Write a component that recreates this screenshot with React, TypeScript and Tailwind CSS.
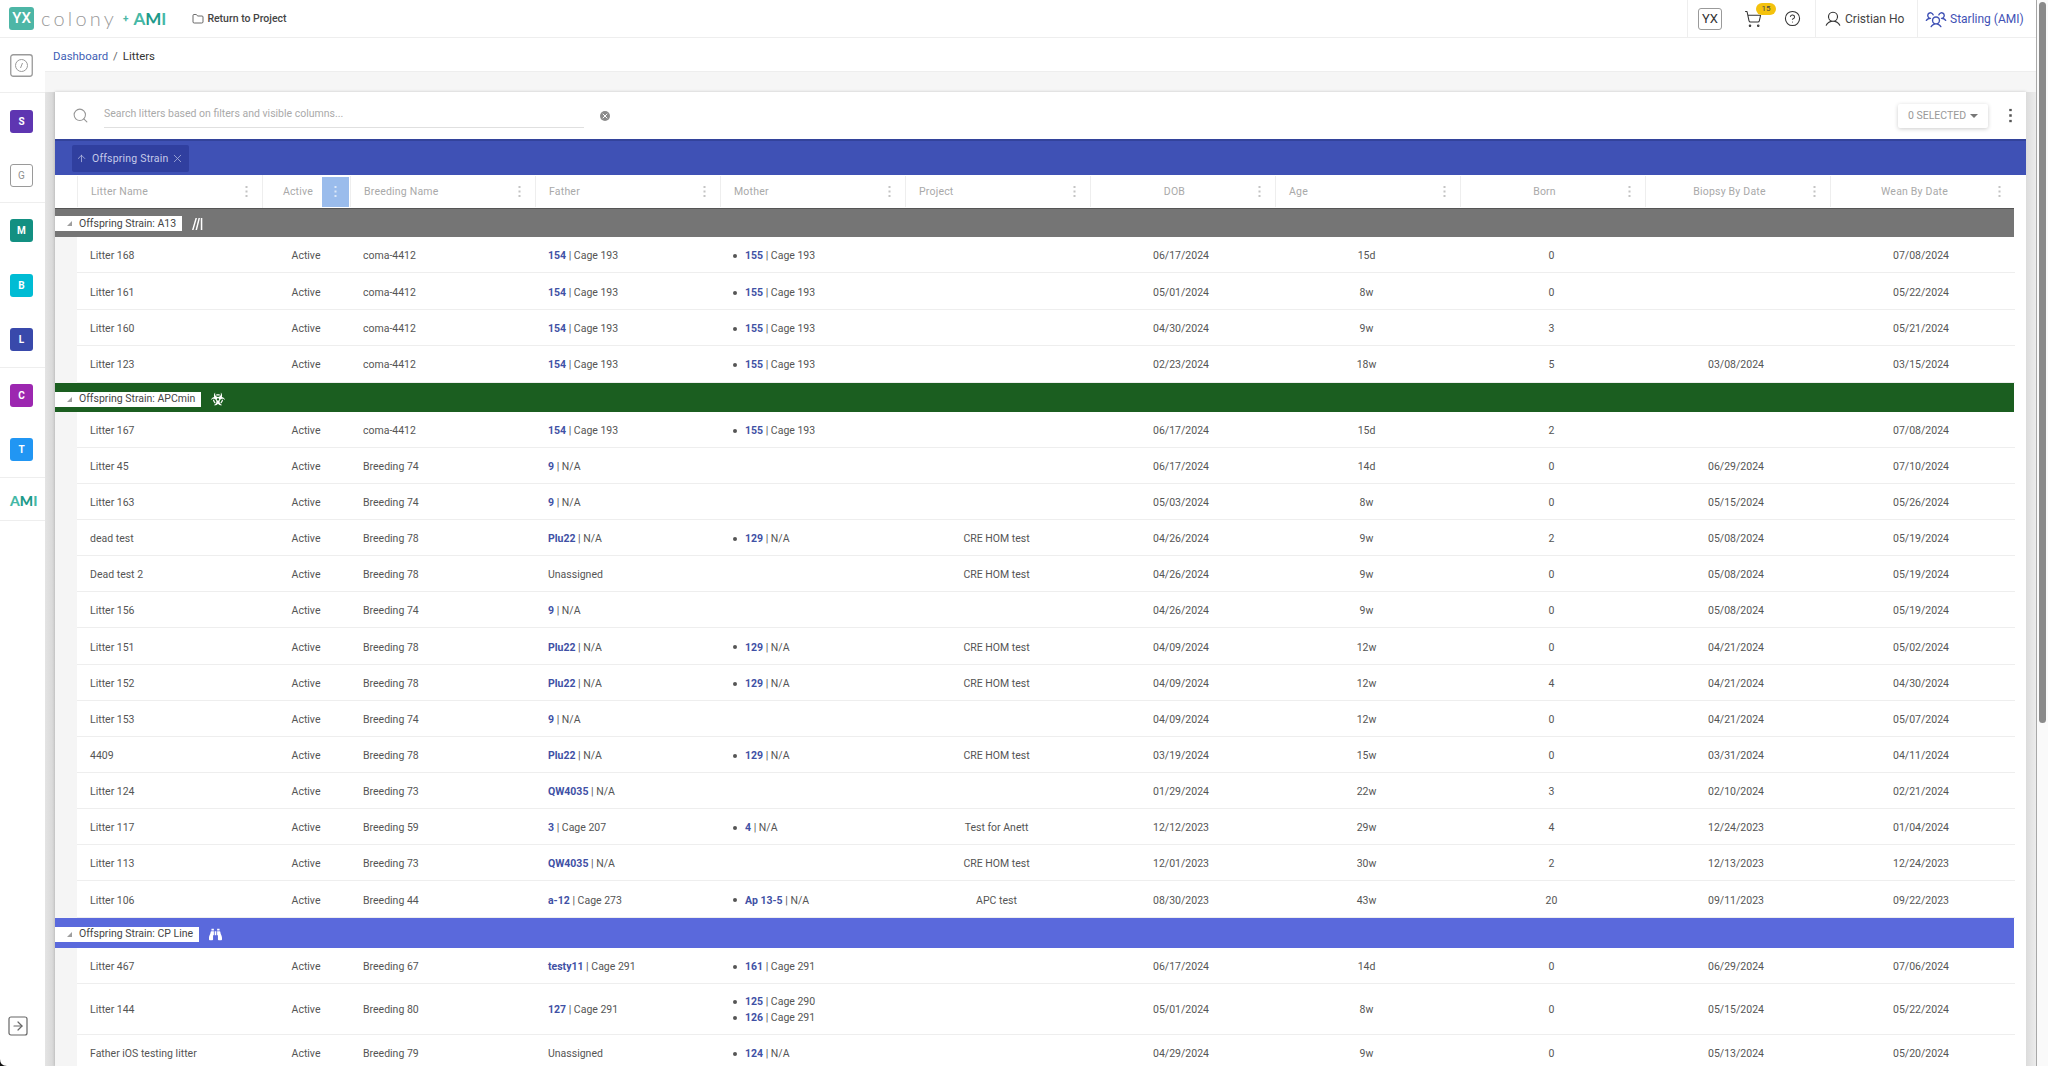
import { CircleHelp, Folder, Search, ShoppingCart, SquareArrowRight, X, ArrowUp } from "lucide-react";
import { FaBinoculars, FaBiohazard } from "react-icons/fa";
import { PiUser, PiUsersThree } from "react-icons/pi";

type Parent = { id: string; rest: string };
type Litter = {
  name: string;
  breeding: string;
  father?: Parent;
  mothers?: Parent[];
  project?: string;
  dob: string;
  age: string;
  born: string;
  biopsy?: string;
  wean: string;
};

const coma = { breeding: "coma-4412", father: { id: "154", rest: "Cage 193" }, mothers: [{ id: "155", rest: "Cage 193" }] };
const plu = { breeding: "Breeding 78", father: { id: "Plu22", rest: "N/A" }, mothers: [{ id: "129", rest: "N/A" }], project: "CRE HOM test" };
const nine = { breeding: "Breeding 74", father: { id: "9", rest: "N/A" } };

const a13: Litter[] = [
  { name: "Litter 168", ...coma, dob: "06/17/2024", age: "15d", born: "0", wean: "07/08/2024" },
  { name: "Litter 161", ...coma, dob: "05/01/2024", age: "8w", born: "0", wean: "05/22/2024" },
  { name: "Litter 160", ...coma, dob: "04/30/2024", age: "9w", born: "3", wean: "05/21/2024" },
  { name: "Litter 123", ...coma, dob: "02/23/2024", age: "18w", born: "5", biopsy: "03/08/2024", wean: "03/15/2024" },
];

const apc: Litter[] = [
  { name: "Litter 167", ...coma, dob: "06/17/2024", age: "15d", born: "2", wean: "07/08/2024" },
  { name: "Litter 45", ...nine, dob: "06/17/2024", age: "14d", born: "0", biopsy: "06/29/2024", wean: "07/10/2024" },
  { name: "Litter 163", ...nine, dob: "05/03/2024", age: "8w", born: "0", biopsy: "05/15/2024", wean: "05/26/2024" },
  { name: "dead test", ...plu, dob: "04/26/2024", age: "9w", born: "2", biopsy: "05/08/2024", wean: "05/19/2024" },
  { name: "Dead test 2", breeding: "Breeding 78", project: "CRE HOM test", dob: "04/26/2024", age: "9w", born: "0", biopsy: "05/08/2024", wean: "05/19/2024" },
  { name: "Litter 156", ...nine, dob: "04/26/2024", age: "9w", born: "0", biopsy: "05/08/2024", wean: "05/19/2024" },
  { name: "Litter 151", ...plu, dob: "04/09/2024", age: "12w", born: "0", biopsy: "04/21/2024", wean: "05/02/2024" },
  { name: "Litter 152", ...plu, dob: "04/09/2024", age: "12w", born: "4", biopsy: "04/21/2024", wean: "04/30/2024" },
  { name: "Litter 153", ...nine, dob: "04/09/2024", age: "12w", born: "0", biopsy: "04/21/2024", wean: "05/07/2024" },
  { name: "4409", ...plu, dob: "03/19/2024", age: "15w", born: "0", biopsy: "03/31/2024", wean: "04/11/2024" },
  { name: "Litter 124", breeding: "Breeding 73", father: { id: "QW4035", rest: "N/A" }, dob: "01/29/2024", age: "22w", born: "3", biopsy: "02/10/2024", wean: "02/21/2024" },
  { name: "Litter 117", breeding: "Breeding 59", father: { id: "3", rest: "Cage 207" }, mothers: [{ id: "4", rest: "N/A" }], project: "Test for Anett", dob: "12/12/2023", age: "29w", born: "4", biopsy: "12/24/2023", wean: "01/04/2024" },
  { name: "Litter 113", breeding: "Breeding 73", father: { id: "QW4035", rest: "N/A" }, project: "CRE HOM test", dob: "12/01/2023", age: "30w", born: "2", biopsy: "12/13/2023", wean: "12/24/2023" },
  { name: "Litter 106", breeding: "Breeding 44", father: { id: "a-12", rest: "Cage 273" }, mothers: [{ id: "Ap 13-5", rest: "N/A" }], project: "APC test", dob: "08/30/2023", age: "43w", born: "20", biopsy: "09/11/2023", wean: "09/22/2023" },
];

const cpLine: Litter[] = [
  { name: "Litter 467", breeding: "Breeding 67", father: { id: "testy11", rest: "Cage 291" }, mothers: [{ id: "161", rest: "Cage 291" }], dob: "06/17/2024", age: "14d", born: "0", biopsy: "06/29/2024", wean: "07/06/2024" },
  { name: "Litter 144", breeding: "Breeding 80", father: { id: "127", rest: "Cage 291" }, mothers: [{ id: "125", rest: "Cage 290" }, { id: "126", rest: "Cage 291" }], dob: "05/01/2024", age: "8w", born: "0", biopsy: "05/15/2024", wean: "05/22/2024" },
  { name: "Father iOS testing litter", breeding: "Breeding 79", mothers: [{ id: "124", rest: "N/A" }], dob: "04/29/2024", age: "9w", born: "0", biopsy: "05/13/2024", wean: "05/20/2024" },
];

const GRID = "grid grid-cols-[22px_185px_88px_repeat(9,185px)]";

function Dots({ className = "" }: { className?: string }) {
  return (
    <svg width="3" height="11" viewBox="0 0 3 11" className={className} fill="currentColor">
      <rect x="0.5" y="0" width="2" height="2" />
      <rect x="0.5" y="4.5" width="2" height="2" />
      <rect x="0.5" y="9" width="2" height="2" />
    </svg>
  );
}

function HeaderCell({ label, align = "left" }: { label: string; align?: "left" | "center" }) {
  return (
    <div className="flex items-center border-l border-[#eeeeee] my-[1px]">
      <div className={`flex-1 pt-[1px] text-[10.5px] tracking-[0.2px] text-[#a9a9a9] ${align === "center" ? "text-center" : "pl-[13px]"}`}>{label}</div>
      <Dots className="mr-[14px] text-[#c4c4c4]" />
    </div>
  );
}

function SideIcon({ letter, color, low }: { letter: string; color: string; low?: boolean }) {
  return (
    <div className={`flex h-[54.6px] items-center pl-[10px] ${low ? "pt-[2px]" : ""}`}>
      <div className={`flex h-[23px] w-[23px] items-center justify-center rounded-[3px] text-[10px] font-bold text-white ${color}`}>{letter}</div>
    </div>
  );
}

function Row({ row, height }: { row: Litter; height: string }) {
  const cell = "flex h-full items-center border-b border-[#eeeeee] pt-[3px]";
  return (
    <div className={`${GRID} ${height} items-center text-[10.5px] text-[#555555]`}>
      <div className="h-full bg-[#f5f5f5]" />
      <div className={`${cell} pl-[13px]`}>{row.name}</div>
      <div className={`${cell} justify-center`}>Active</div>
      <div className={`${cell} pl-[13px]`}>{row.breeding}</div>
      <div className={`${cell} pl-[13px]`}>
        {row.father ? (
          <span>
            <span className="font-bold text-[#3f51a5]">{row.father.id}</span> | {row.father.rest}
          </span>
        ) : (
          "Unassigned"
        )}
      </div>
      <div className={`${cell} flex-col !items-start justify-center gap-[1px] pl-[13px]`}>
        {row.mothers?.map((m) => (
          <div key={m.id} className="flex h-[15px] items-center">
            <span className="mr-[8px] h-[4px] w-[4px] rounded-full bg-[#555555]" />
            <span>
              <span className="font-bold text-[#3f51a5]">{m.id}</span> | {m.rest}
            </span>
          </div>
        ))}
      </div>
      <div className={`${cell} justify-center pr-[2px]`}>{row.project}</div>
      <div className={`${cell} justify-center pr-[3px]`}>{row.dob}</div>
      <div className={`${cell} justify-center pr-[2px]`}>{row.age}</div>
      <div className={`${cell} justify-center pr-[2px]`}>{row.born}</div>
      <div className={`${cell} justify-center pr-[3px]`}>{row.biopsy}</div>
      <div className={`${cell} justify-center pr-[3px]`}>{row.wean}</div>
    </div>
  );
}

function GroupRow({ label, color, height, icon }: { label: string; color: string; height: string; icon: React.ReactNode }) {
  return (
    <div className={`flex w-[1959px] items-center ${color} ${height}`}>
      <div className="flex h-[15px] items-center bg-white pl-[12px] pr-[6px] text-[10.5px] text-[#444444]">
        <svg width="5" height="5" viewBox="0 0 5 5" className="mr-[7px]" fill="#9e9e9e">
          <path d="M5 0V5H0Z" />
        </svg>
        {label}
      </div>
      <div className="ml-[10px] text-white">{icon}</div>
    </div>
  );
}

export default function App() {
  return (
    <div className="relative flex h-screen overflow-hidden bg-white font-['Roboto',sans-serif]">
      <div className="flex min-w-0 flex-1 flex-col border-r border-[#a8a8a8]">
        {/* top bar */}
        <header className="flex h-[38px] shrink-0 items-center border-b border-[#eeeeee] shadow-[0_1px_2px_rgba(0,0,0,0.06)]">
          <div className="ml-[9px] flex h-[23px] w-[25px] items-center justify-center rounded-[3px] bg-[#4db6a6] text-[15px] font-medium text-white">YX</div>
          <span className="ml-[7px] pb-[2px] font-['Lato',sans-serif] text-[20px] font-light tracking-[3.2px] text-[#999999]">colony</span>
          <span className="ml-[6px] text-[10px] font-bold text-[#4db6a6]">+</span>
          <span className="ml-[5px] font-['Lato',sans-serif] text-[17px] font-bold text-[#45b8a6]">
            A<span className="text-[#1d9a8a]">M</span>I
          </span>
          <Folder className="ml-[26px] h-[12px] w-[12px] text-[#444444]" strokeWidth={1.6} />
          <span className="ml-[3px] text-[10.5px] font-medium text-[#444444]">Return to Project</span>

          <div className="ml-auto flex h-full items-center">
            <div className="flex h-full w-[128px] items-center border-l border-[#eeeeee] pl-[10px]">
              <div className="flex h-[22px] w-[24px] items-center justify-center rounded-[3px] border border-[#9a9a9a] text-[13px] text-[#333333]">YX</div>
              <div className="relative ml-[22px]">
                <ShoppingCart className="h-[18px] w-[18px] text-[#333333]" strokeWidth={1.4} />
                <span className="absolute -top-[7px] left-[12px] flex h-[12px] w-[20px] items-center justify-center rounded-full bg-[#f4c20d] text-[8px] text-[#444444]">15</span>
              </div>
              <CircleHelp className="ml-[22px] h-[17px] w-[17px] text-[#333333]" strokeWidth={1.5} />
            </div>
            <div className="flex h-full w-[102px] items-center border-l border-[#eeeeee] pl-[8px] text-[12px] text-[#444444]">
              <PiUser className="h-[18px] w-[18px] text-[#333333]" />
              <span className="ml-[3px]">Cristian Ho</span>
            </div>
            <div className="flex h-full w-[119px] items-center border-l border-[#eeeeee] pl-[7px] text-[12px] text-[#3f51b5]">
              <PiUsersThree className="h-[22px] w-[22px]" />
              <span className="ml-[3px]">Starling (AMI)</span>
            </div>
          </div>
        </header>

        <div className="flex min-h-0 flex-1">
          {/* side nav */}
          <nav className="flex w-[45px] shrink-0 flex-col bg-white">
            <div className="flex h-[55px] items-center border-b border-[#eeeeee] pl-[10px]">
              <svg width="23" height="23" viewBox="0 0 23 23" fill="none" stroke="#9a9a9a">
                <rect x="0.75" y="0.75" width="21.5" height="21.5" rx="2.5" strokeWidth="1.3" />
                <circle cx="11.5" cy="11.5" r="6" strokeWidth="1" />
                <path d="M10.5 14l2-5" strokeWidth="1" />
              </svg>
            </div>
            <div className="border-b border-[#eeeeee]">
              <SideIcon letter="S" color="bg-[#5e35b1]" low />
              <div className="flex h-[54.6px] items-center pl-[10px] pt-[2px]">
                <div className="flex h-[23px] w-[23px] items-center justify-center rounded-[3px] border border-[#9a9a9a] text-[10px] text-[#8f8f8f]">G</div>
              </div>
            </div>
            <div className="border-b border-[#eeeeee]">
              <SideIcon letter="M" color="bg-[#139082]" />
              <SideIcon letter="B" color="bg-[#00bcd4]" />
              <SideIcon letter="L" color="bg-[#3949ab]" />
            </div>
            <div className="border-b border-[#eeeeee]">
              <SideIcon letter="C" color="bg-[#9c27b0]" />
              <SideIcon letter="T" color="bg-[#2196f3]" />
            </div>
            <div className="flex h-[43px] items-center border-b border-[#eeeeee] pl-[10px] pt-[3px] font-['Lato',sans-serif] text-[14px] font-black text-[#45b8a6]">
              A<span className="text-[#1d9a8a]">M</span>I
            </div>
            <SquareArrowRight className="mt-auto mb-[28px] ml-[6px] h-[24px] w-[24px] text-[#666666]" strokeWidth={1.2} />
          </nav>

          <main className="flex min-w-0 flex-1 flex-col bg-[#f6f6f6]">
            <div className="flex h-[34px] shrink-0 items-center border-b border-[#eeeeee] bg-white pl-[8px] pt-[4px] text-[11.4px]">
              <span className="text-[#3f5fb5]">Dashboard</span>
              <span className="mx-[5px] text-[#666666]">/</span>
              <span className="text-[#333333]">Litters</span>
            </div>
            <div className="flex min-h-0 flex-1 pt-[20px]">
              <div className="w-[10px] shrink-0 bg-gradient-to-r from-[#e4e4e4] to-[#d6d6d6]" />
              <section className="min-w-0 flex-1 overflow-hidden bg-white shadow-[0_0_3px_rgba(0,0,0,0.2)]">
                <div className="flex h-[47px] items-center">
                  <Search className="ml-[17px] h-[17px] w-[17px] text-[#969696]" strokeWidth={1.5} />
                  <div className="ml-[15px] flex h-[24px] w-[480px] items-center border-b border-[#e0e0e0] pb-[3px] text-[10.5px] text-[#aaaaaa]">
                    Search litters based on filters and visible columns...
                  </div>
                  <div className="ml-[16px] flex h-[10px] w-[10px] items-center justify-center rounded-full bg-[#8c8c8c]">
                    <X className="h-[8px] w-[8px] text-white" strokeWidth={3} />
                  </div>
                  <div className="ml-auto flex h-[24px] w-[90px] items-center justify-center rounded-[2px] bg-white text-[10.5px] text-[#999999] shadow-[0_1px_4px_rgba(0,0,0,0.2)]">
                    0 SELECTED
                    <svg width="8" height="4" viewBox="0 0 8 4" className="ml-[4px]" fill="#777777">
                      <path d="M0 0H8L4 4Z" />
                    </svg>
                  </div>
                  <Dots className="ml-[21px] mr-[14px] scale-125 text-[#555555]" />
                </div>

                <div className="flex h-[36px] items-center border-t-2 border-[#33439b] bg-[#3f51b5] pl-[17px]">
                  <div className="flex h-[27px] w-[117px] items-center rounded-[2px] bg-[#303f9f] pt-[1px] text-[10.5px] tracking-[0.2px] text-[#c5cae9]">
                    <ArrowUp className="ml-[4px] h-[13px] w-[11px] text-[#c5cae9]" strokeWidth={1.5} />
                    <span className="ml-[5px]">Offspring Strain</span>
                    <X className="ml-auto mr-[5px] h-[13px] w-[13px] text-[#a9b2dd]" strokeWidth={1.5} />
                  </div>
                </div>

                <div className={`${GRID} relative z-10 h-[33px] bg-white`}>
                  <div />
                  <HeaderCell label="Litter Name" />
                  <div className="flex items-center border-l border-[#eeeeee]">
                    <div className="flex-1 pr-[9px] pt-[1px] text-right text-[10.5px] tracking-[0.2px] text-[#a9a9a9]">Active</div>
                    <div className="mr-[1px] flex h-[30px] w-[27px] items-center justify-center bg-[#9abcec] text-[#dce8f8]">
                      <Dots />
                    </div>
                  </div>
                  <HeaderCell label="Breeding Name" />
                  <HeaderCell label="Father" />
                  <HeaderCell label="Mother" />
                  <HeaderCell label="Project" />
                  <HeaderCell label="DOB" align="center" />
                  <HeaderCell label="Age" />
                  <HeaderCell label="Born" align="center" />
                  <HeaderCell label="Biopsy By Date" align="center" />
                  <HeaderCell label="Wean By Date" align="center" />
                </div>

                <GroupRow
                  label="Offspring Strain: A13"
                  color="bg-[#757575] border-t border-[#555555] pt-[1px]"
                  height="h-[29px]"
                  icon={
                    <svg width="11" height="12" viewBox="0 0 11 12" fill="white">
                      <path d="M0 12L3.5 0H5L1.5 12ZM3.5 12L6.5 0H8L5 12ZM8.8 0H10.3V12H8.8Z" />
                    </svg>
                  }
                />
                {a13.map((r) => (
                  <Row key={r.name} row={r} height="h-[36.4px]" />
                ))}
                <GroupRow label="Offspring Strain: APCmin" color="bg-[#1b5e20] pt-[4px]" height="h-[29px]" icon={<FaBiohazard className="h-[14px] w-[14px]" />} />
                {apc.map((r) => (
                  <Row key={r.name} row={r} height="h-[36.15px]" />
                ))}
                <GroupRow label="Offspring Strain: CP Line" color="bg-[#5a69dc] pt-[3px]" height="h-[30px]" icon={<FaBinoculars className="h-[13px] w-[13px]" />} />
                {cpLine.map((r) => (
                  <Row key={r.name} row={r} height={r.mothers?.length === 2 ? "h-[51px]" : "h-[36.15px]"} />
                ))}
              </section>
              <div className="w-[10px] shrink-0 bg-gradient-to-r from-[#dcdcdc] to-[#ececec]" />
            </div>
          </main>
        </div>
      </div>

      {/* page scrollbar */}
      <div className="w-[11px] shrink-0 bg-[#fafafa] px-[2px] pt-[2px]">
        <div className="h-[721px] rounded-full bg-[#8a8a8a]" />
      </div>

      <svg width="7" height="7" viewBox="0 0 7 7" className="absolute bottom-0 left-0" fill="#111111">
        <path d="M0 0Q0 7 7 7H0Z" />
      </svg>
    </div>
  );
}
